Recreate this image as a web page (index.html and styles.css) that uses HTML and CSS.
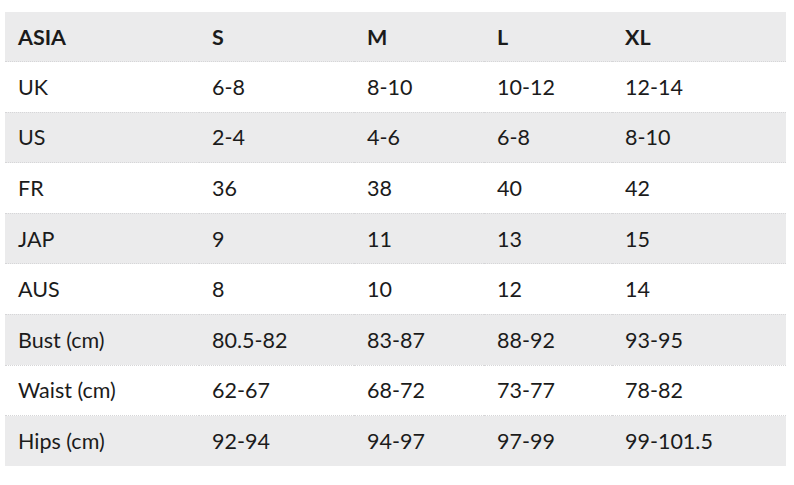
FILE: index.html
```html
<!DOCTYPE html>
<html>
<head>
<meta charset="utf-8">
<link rel="stylesheet" href="styles.css">
</head>
<body>
<table class="size-table">
  <colgroup>
    <col class="c1"><col class="c2"><col class="c3"><col class="c4"><col class="c5">
  </colgroup>
  <thead>
    <tr><th>ASIA</th><th>S</th><th>M</th><th>L</th><th>XL</th></tr>
  </thead>
  <tbody>
    <tr><td>UK</td><td>6-8</td><td>8-10</td><td>10-12</td><td>12-14</td></tr>
    <tr><td>US</td><td>2-4</td><td>4-6</td><td>6-8</td><td>8-10</td></tr>
    <tr><td>FR</td><td>36</td><td>38</td><td>40</td><td>42</td></tr>
    <tr><td>JAP</td><td>9</td><td>11</td><td>13</td><td>15</td></tr>
    <tr><td>AUS</td><td>8</td><td>10</td><td>12</td><td>14</td></tr>
    <tr><td>Bust (cm)</td><td>80.5-82</td><td>83-87</td><td>88-92</td><td>93-95</td></tr>
    <tr><td>Waist (cm)</td><td>62-67</td><td>68-72</td><td>73-77</td><td>78-82</td></tr>
    <tr><td>Hips (cm)</td><td>92-94</td><td>94-97</td><td>97-99</td><td>99-101.5</td></tr>
  </tbody>
</table>
</body>
</html>
```
FILE: styles.css
```css
html, body {
  margin: 0;
  padding: 0;
  background: #ffffff;
}
body {
  padding: 12px 0 0 5px;
  font-family: Lato, "Open Sans", sans-serif;
  color: #1b1b1b;
}
.size-table {
  width: 781px;
  border-collapse: collapse;
  table-layout: fixed;
  font-size: 21.5px;
}
.c1 { width: 194px; }
.c2 { width: 155px; }
.c3 { width: 130px; }
.c4 { width: 128px; }
.c5 { width: 174px; }
.size-table th,
.size-table td {
  height: 50.6px;
  padding: 0 0 0 13px;
  text-align: left;
  vertical-align: middle;
  border-bottom: 1px dotted #d6d6d8;
  box-sizing: border-box;
}
.size-table th {
  font-weight: 700;
  height: 49.5px;
}
.size-table thead tr,
.size-table tbody tr:nth-child(even) {
  background: #ebebec;
}
.size-table tbody tr:last-child td {
  border-bottom: none;
}
```
